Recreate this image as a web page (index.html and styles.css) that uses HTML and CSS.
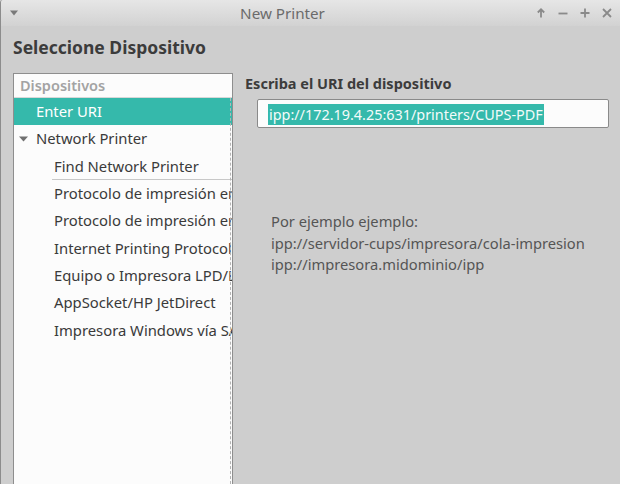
FILE: index.html
```html
<!DOCTYPE html>
<html>
<head>
<meta charset="utf-8">
<link rel="stylesheet" href="styles.css">
</head>
<body>
<div class="window">
  <div class="titlebar">
    <div class="tb-menu">
      <svg width="10" height="6" viewBox="0 0 10 6"><path d="M1 0.5h8l-4 5z" fill="#7a7a7a"/></svg>
    </div>
    <div class="tb-title">New Printer</div>
    <div class="tb-buttons">
      <svg width="10" height="10" viewBox="0 0 10 10"><path d="M5 9.5V1.5M1.8 4.5L5 1.3L8.2 4.5" stroke="#8a8a8a" stroke-width="1.8" fill="none"/></svg>
      <svg width="10" height="10" viewBox="0 0 10 10"><path d="M0.5 5.5h9" stroke="#8a8a8a" stroke-width="1.8"/></svg>
      <svg width="10" height="10" viewBox="0 0 10 10"><path d="M0.5 5h9M5 0.5v9" stroke="#8a8a8a" stroke-width="1.8"/></svg>
      <svg width="10" height="10" viewBox="0 0 10 10"><path d="M1 1l8 8M9 1l-8 8" stroke="#8a8a8a" stroke-width="1.8"/></svg>
    </div>
  </div>
  <div class="content">
    <h1 class="heading">Seleccione Dispositivo</h1>
    <div class="main">
      <div class="tree">
        <div class="tree-header">Dispositivos</div>
        <div class="tree-body">
          <div class="row selected lvl1">Enter URI</div>
          <div class="row lvl1 parent"><span class="expander"><svg width="9" height="6" viewBox="0 0 9 6"><path d="M0 0.5h9l-4.5 5z" fill="#707070"/></svg></span>Network Printer</div>
          <div class="row lvl2 sep">Find Network Printer</div>
          <div class="row lvl2">Protocolo de impresión en LPD/LPR</div>
          <div class="row lvl2">Protocolo de impresión en HTTP</div>
          <div class="row lvl2">Internet Printing Protocol (ipp)</div>
          <div class="row lvl2">Equipo o Impresora LPD/LPR</div>
          <div class="row lvl2">AppSocket/HP JetDirect</div>
          <div class="row lvl2">Impresora Windows vía SAMBA</div>
        </div>
      </div>
      <div class="pane">
        <div class="pane-label">Escriba el URI del dispositivo</div>
        <div class="entry"><span class="sel">ipp://172.19.4.25:631/printers/CUPS-PDF</span></div>
        <div class="examples">
          <div>Por ejemplo ejemplo:</div>
          <div>ipp://servidor-cups/impresora/cola-impresion</div>
          <div>ipp://impresora.midominio/ipp</div>
        </div>
      </div>
    </div>
  </div>
</div>
</body>
</html>
```
FILE: styles.css
```css
* { box-sizing: border-box; }
html, body {
  margin: 0;
  padding: 0;
  width: 620px;
  height: 484px;
  overflow: hidden;
  background: #cecece;
  font-family: "Noto Sans", "Open Sans", sans-serif;
}
.window {
  width: 620px;
  height: 484px;
  display: flex;
  flex-direction: column;
  border-left: 1px solid #8c8c8c;
  border-top-left-radius: 3px;
  background: #cecece;
  overflow: hidden;
}
.titlebar {
  height: 26px;
  flex: none;
  display: flex;
  align-items: center;
  background: linear-gradient(#e6e6e6, #d2d2d2);
}
.tb-menu {
  width: 30px;
  padding-left: 8px;
  display: flex;
  align-items: center;
}
.tb-title {
  flex: 1;
  text-align: center;
  font-size: 15.2px;
  color: #6b6b6b;
  padding-left: 2px;
}
.tb-buttons {
  width: 88px;
  display: flex;
  gap: 12px;
  align-items: center;
  padding-left: 4px;
}
.content {
  flex: 1;
  display: flex;
  flex-direction: column;
  padding-left: 12px;
  min-height: 0;
}
.heading {
  margin: 0;
  font-size: 17.5px;
  font-weight: bold;
  color: #3c3c3c;
  line-height: 22px;
  padding-top: 10px;
  height: 47px;
}
.main {
  flex: 1;
  display: flex;
  min-height: 0;
}
.tree {
  width: 220px;
  flex: none;
  background: #fcfcfc;
  border: 1px solid #8e8e8e;
  border-bottom: none;
  display: flex;
  flex-direction: column;
  position: relative;
}
.tree::after {
  content: "";
  position: absolute;
  right: 1px;
  top: 24px;
  bottom: 0;
  border-right: 1px dashed #b4b4b4;
}
.tree-header {
  height: 24px;
  line-height: 22px;
  padding-left: 6px;
  font-size: 14.5px;
  font-weight: 600;
  color: #a3a3a3;
  border-bottom: 1px solid #d8d8d8;
}
.row {
  height: 27.3px;
  line-height: 27px;
  font-size: 14.8px;
  color: #3a3a3a;
  white-space: nowrap;
  overflow: hidden;
  display: flex;
  align-items: center;
}
.row.selected {
  background: #35b9ab;
  color: #ffffff;
}
.lvl1 { padding-left: 22px; }
.lvl2 { padding-left: 40px; }
.parent { padding-left: 5px; }
.expander {
  width: 17px;
  display: flex;
  align-items: center;
}
.sep { position: relative; }
.sep::after {
  content: "";
  position: absolute;
  left: 38px;
  right: 0;
  bottom: 0;
  border-bottom: 1px solid #c8c8c8;
}
.pane {
  flex: 1;
  padding-left: 12px;
  display: flex;
  flex-direction: column;
}
.pane-label {
  font-size: 14.5px;
  font-weight: bold;
  color: #3c3c3c;
  line-height: 20px;
}
.entry {
  margin-top: 6px;
  margin-left: 12px;
  width: 352px;
  height: 29px;
  background: #fcfcfc;
  border: 1px solid #8a8a8a;
  border-radius: 2px;
  padding: 3px 0 0 10px;
}
.sel {
  display: inline-block;
  background: #35b9ab;
  color: #f4fbfa;
  font-size: 14.4px;
  line-height: 21px;
  padding: 0 1px;
}
.examples {
  margin-top: 83px;
  margin-left: 26px;
  font-size: 14.7px;
  color: #555555;
  line-height: 21.5px;
}
```
